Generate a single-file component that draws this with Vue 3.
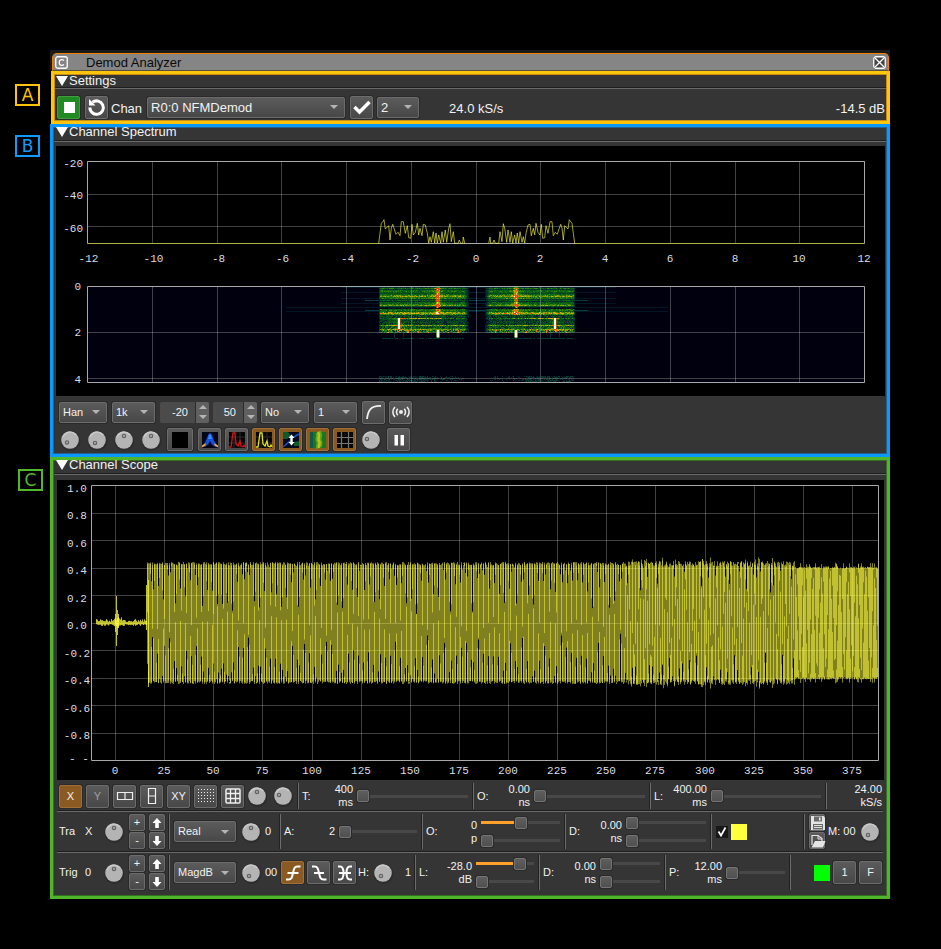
<script setup>
import { h } from 'vue'

const Dial = ({ dx, dy, label }) =>
  h('svg', { class: 'dial', viewBox: '0 0 22 22', role: 'slider', 'aria-label': label, 'aria-valuenow': 0, tabindex: 0 }, [
    h('circle', { cx: 11.5, cy: 12, r: 10, fill: '#262626', opacity: 0.55 }),
    h('circle', { cx: 11, cy: 11, r: 8.8, fill: '#b4b4b4' }),
    h('path', { d: 'M4 8a7.6 7.6 0 0 1 13-2', fill: 'none', stroke: '#cacaca', 'stroke-width': 1.4 }),
    h('circle', { cx: 11 + dx, cy: 11 + dy, r: 1.7, fill: '#a2a2a2', stroke: '#606060', 'stroke-width': 1.1 }),
  ])
Dial.props = ['dx', 'dy', 'label']

const Slider = ({ value, label }) =>
  h('input', {
    type: 'range', class: 'slider', min: 0, max: 100, value: value || 0, 'aria-label': label,
    style: { '--fill': (value || 0) + '%' },
  })
Slider.props = ['value', 'label']

const Drop = ({ text, label }) =>
  h('span', { class: 'drop' }, [
    h('select', { 'aria-label': label }, [h('option', text)]),
    h('i'),
  ])
Drop.props = ['text', 'label']

const Spin = ({ value, label }) =>
  h('span', { class: 'spin' }, [
    h('input', { type: 'text', inputmode: 'numeric', value, 'aria-label': label }),
    h('span', [
      h('button', { type: 'button', 'aria-label': label + ' up' }, [h('i', { class: 'up' })]),
      h('button', { type: 'button', 'aria-label': label + ' down' }, [h('i', { class: 'down' })]),
    ]),
  ])
Spin.props = ['value', 'label']

let seed = 7
const rnd = () => {
  seed = (seed * 16807) % 2147483647
  return seed / 2147483647
}

/* spectrum plot */
const freqTicks = Array.from({ length: 13 }, (_, i) => ({
  x: Math.round(31 + i * 64.75) + 0.5,
  tx: Math.round(31 + i * 64.75) + (i < 6 ? 1.5 : 0),
  label: String(i * 2 - 12),
}))
const lobe = [
  26, 115, 30, 85, 34, 55, 38, 50, 42, 44, 46, 72, 50, 68, 56, 62, 60, 105, 64, 70, 68, 58, 72, 70, 78, 88, 84, 82,
  90, 92, 94, 50, 100, 50, 106, 85, 112, 62, 116, 98, 122, 100, 126, 58, 130, 90, 136, 82, 142, 55, 146, 90, 150, 70,
  156, 92, 160, 58, 166, 60, 172, 85, 176, 114, 180, 95, 184, 112, 190, 80, 194, 114, 198, 84, 202, 114, 206, 90,
  212, 114, 216, 80, 220, 112, 226, 75, 230, 112, 236, 70, 240, 56, 244, 110, 250, 80, 254, 115, 264, 115, 268, 105,
  272, 115, 278, 115, 280, 96, 284, 115,
]
const lobePath = (mirror) => {
  let d = ''
  for (let i = 0; i < lobe.length; i += 2) {
    const x = (mirror ? 640 - lobe[i] : lobe[i]) / 3 + 314
    d += (i ? 'L' : 'M') + x.toFixed(1) + ' ' + (lobe[i + 1] / 3 + 59).toFixed(1)
  }
  return d
}
const spectrum = [lobePath(false), lobePath(true)]

/* waterfall */
const ramp = ['#01080f', '#02202a', '#033b2c', '#07501a', '#0f6c12', '#3a8608', '#86a006', '#cfae06', '#ee6a10', '#ee2a12', '#fff4c8']
const rowLevel = [
  0.15, 0.42, 0.18, 0.38, 0.42, 0.33, 0.28, 0.38, 0.5, 0.58, 0.42, 0.45, 0.18, 0.34, 0.15, 0.34, 0.38, 0.45, 0.55,
  0.3, 0.06, 0.05, 0.4, 0.42, 0.36, 0.57, 0.66, 0.48, 0.25, 0.32, 0.25, 0.42, 0.28, 0.22, 0.27, 0.3, 0.26, 0.3,
  0.55, 0.38, 0.36, 0.4, 0.57, 0.52, 0.44, 0.38,
]
const fall = ramp.map(() => '')
const put = (x, y, v) => {
  const k = Math.max(0, Math.min(10, Math.round(v * 10)))
  if (k) fall[k] += `M${x} ${y + 0.5}h1`
}
for (let i = 0; i < 46; i++) {
  const y = 141 + i
  for (let s = 0; s < 90; s++) {
    const edge = Math.min(1, (90 - s) / 5, (s + 1) / 2)
    for (const side of [0, 1]) {
      const x = side ? 518 - s : 323 + s
      let v = rowLevel[i] * (0.75 + rnd() * 0.45) * edge
      if (i > 27 && i !== 38 && i < 42 && rnd() < 0.3) v *= 0.4
      if (i > 42 && rnd() < 0.3) v *= 0.3
      const hot = Math.abs(s - 58.5)
      if (i < 28 && rowLevel[i] > 0.1) v += 0.3 * Math.exp(-hot / 3) + (hot < 2 ? 0.12 : 0)
      const warm = Math.abs(s - 20.5)
      if (i > 30 && i < 44) v += 0.2 * Math.exp(-warm / 5)
      if (i > 42 && s < 85 && (s + 2) % 10 < 2 && rnd() > 0.45) v = 0.8
      if (i === 31 && s > 15 && s < 64) v += 0.22
      put(x, y, v)
    }
  }
}
for (let s = 0; s < 85; s++) {
  for (const x of [323 + s, 518 - s]) {
    if (rnd() < 0.7) put(x, 192, 0.15)
    for (let y = 230; y < 236; y++) if (rnd() < (s < 50 ? 0.7 : 0.3)) put(x, y, rnd() < 0.5 ? 0.1 : 0.2)
  }
}
const echoes = [141, 146, 152, 157, 161, 165]

/* scope plot */
const timeTicks = Array.from({ length: 16 }, (_, i) => ({
  x: Math.round(58 + i * 49.13) + 0.5,
  tx: Math.round(58 + i * 49.13),
  label: String(i * 25),
}))
const ampTicks = ['1.0', '0.8', '0.6', '0.4', '0.2', '0.0', '-0.2', '-0.4', '-0.6', '-0.8'].map((label, i) => ({
  label,
  y: Math.round(5 + i * 27.5) + 0.5,
  ty: Math.round(11.6 + i * 27.5),
}))
const wave = ['', '', '', '']
const quiet = (() => {
  let d = ''
  for (let x = 39; x < 90; x++) {
    const near = x > 55 && x < 65 ? 3 : 0
    const a = 1 + rnd() * 3 + near * rnd()
    d += `M${x + 0.5} ${(143 - a).toFixed(1)}V${(143 + 1 + rnd() * 2 + near * rnd()).toFixed(1)}`
  }
  return d
})()
const pulse = 'M58.5 134V152M59.5 116V166M60.5 130V155M61.5 134V148M89.5 105V150M91.5 100V207'
let phase = 0
let peak = 117
let lastPass = 0
for (let x = 90; x < 821; x++) {
  const seen = {}
  const zone = x < 567 ? 0 : x < 738 ? 1 : 2
  const period = [1.69, 1.42, 1.13][zone] * (1 + (rnd() - 0.5) * [0.09, 0.16, 0.08][zone])
  for (let k = 0; k < 24; k++) {
    phase += (2 * Math.PI) / period / 24
    const pass = Math.floor(phase / Math.PI - 0.5)
    if (pass !== lastPass) {
      lastPass = pass
      peak = [114, 111, 107][zone] + rnd() * [7, 12, 5][zone]
      if (zone && rnd() < 0.12) peak += 8
    }
    const v = 143 - Math.max(-1, Math.min(1, Math.sin(phase) * 1.12)) * peak * 0.505
    const id = ((pass % 4) + 4) % 4
    if (!seen[id]) seen[id] = [v, v]
    seen[id][0] = Math.min(seen[id][0], v)
    seen[id][1] = Math.max(seen[id][1], v)
  }
  for (const id in seen) wave[id] += `M${x + 0.5} ${seen[id][0].toFixed(1)}V${seen[id][1].toFixed(1)}`
}
</script>

<template>
  <main class="page">
    <span></span>
    <header class="frame">
      <div class="titlebar">
        <svg class="win-icon" viewBox="0 0 13 13"><rect x=".75" y=".75" width="11.5" height="11.5" rx="2" /><path d="M8.8 4.6C7.8 3 4.2 3 4.2 6.5S7.8 10 8.8 8.4" /></svg>
        <h1>Demod Analyzer</h1>
        <button class="close" aria-label="Close">
          <svg class="win-icon" viewBox="0 0 13 13"><rect x=".75" y=".75" width="11.5" height="11.5" rx="2" /><path d="M2 2l9 9M11 2l-9 9" /></svg>
        </button>
      </div>
    </header>

    <span class="mark mark-a">A</span>
    <section class="panel panel-a">
      <h2><i></i>Settings</h2>
      <div class="settings">
        <button class="btn stop" aria-label="Stop"><svg viewBox="0 0 20 20"><path d="M5 5h11v11H5z" fill="#fff" /></svg></button>
        <button class="btn reset" aria-label="Reset"><svg viewBox="0 0 20 20"><path d="M5.500 5.300A6.700 6.700 0 1 1 2.900 10.500" fill="none" stroke="#fff" stroke-width="3" /><path d="M2 2v6.500H8.500z" fill="#fff" /></svg></button>
        <span class="chan">Chan</span>
        <Drop class="w-chan" text="R0:0 NFMDemod" label="Channel" />
        <button class="btn" aria-label="Apply"><svg viewBox="0 0 20 20"><path d="M2.500 10l5 5L17.500 5" fill="none" stroke="#fff" stroke-width="3.400" /></svg></button>
        <Drop class="w-dec" text="2" label="Decimation" />
        <output class="rate">24.0 kS/s</output>
        <output class="power">-14.5 dB</output>
      </div>
    </section>

    <span class="mark mark-b">B</span>
    <section class="panel panel-b">
      <h2><i></i>Channel Spectrum</h2>
      <svg class="plot plot-spectrum" viewBox="0 0 829 250">
        <g class="grid">
          <path v-for="t in freqTicks" :key="t.x" :d="`M${t.x} 15V97`" />
          <path d="M31 48.5H808M31 80.5H808" />
        </g>
        <path class="axis" d="M31.5 15.5H808.5V97.5H31.5z" />
        <path class="base" d="M32 97.5H323M519 97.5H808" />
        <path v-for="d in spectrum" :key="d" class="trace" :d="d" />
        <g class="tick mid"><text v-for="t in freqTicks" :key="t.x" :x="t.tx" y="116">{{ t.label }}</text></g>
        <g class="tick end">
          <text x="27" y="21">-20</text><text x="27" y="53">-40</text><text x="27" y="86">-60</text>
          <text x="25" y="144">0</text><text x="25" y="190">2</text><text x="25" y="237">4</text>
        </g>
        <rect x="32" y="141" width="777" height="96" fill="#00000f" />
        <g class="echo"><path v-for="y in echoes" :key="y" :d="`M${y > 160 ? 230 : 285} ${y + .5}H${y > 160 ? 612 : 560}M410 ${y + .5}H432`" /><path class="bright" d="M309 154.5H532M309 164.5H532" /></g>
        <g class="fall"><path v-for="(d, i) in fall" :key="i" :d="d" :stroke="ramp[i]" /></g>
        <g>
          <path d="M381.5 142V162M460.5 142V162" stroke="#f2410f" stroke-width="3" stroke-opacity=".8" stroke-dasharray="3 2 5 1" />
          <path d="M381.5 143V162M460.5 143V162" stroke="#ffd9a0" stroke-opacity=".7" stroke-dasharray="1 3 2 3" />
          <path d="M343 172V184M499 172V184" stroke="#e0431c" stroke-width="3" />
          <path d="M343 172V183M499 172V183" stroke="#fffbe6" stroke-width="2" />
          <path d="M382 184V191.500M460 184V191.500" stroke="#5f9a40" stroke-width="4" />
          <path d="M382 184V191.500M460 184V191.500" stroke="#fffbe6" stroke-width="2" />
          <path d="M338.5 187V192M347.5 187V191M494.5 187V192M503.5 187V191" stroke="#04303c" />
        </g>
        <g class="grid">
          <path v-for="t in freqTicks" :key="t.x" :d="`M${t.x} 141V236`" />
          <path d="M31 186.5H808M31 232.5H808" />
        </g>
        <path class="axis" d="M31.5 140.5H808.5V236.5H31.5z" />
      </svg>
      <div class="tools first">
        <Drop class="w-48" text="Han" label="Window" />
        <Drop class="w-43" text="1k" label="FFT size" />
        <Spin class="w-49" value="-20" label="Reference level" />
        <Spin class="w-44" value="50" label="Range" />
        <Drop class="w-48" text="No" label="Averaging mode" />
        <Drop class="w-43" text="1" label="Averages" />
        <button class="btn" aria-label="Linear scale"><svg viewBox="0 0 20 20"><path d="M3 17C4 9 6 3.500 17 4" fill="none" stroke="#eee" stroke-width="1.800" /></svg></button>
        <button class="btn" aria-label="Broadcast"><svg viewBox="0 0 20 20" fill="none" stroke="#eee" stroke-width="1.600"><circle cx="10" cy="10" r="2" fill="#eee" stroke="none" /><path d="M6.800 6.800a4.500 4.500 0 0 0 0 6.400M13.200 6.800a4.500 4.500 0 0 1 0 6.400M4 5a7 7 0 0 0 0 10M16 5a7 7 0 0 1 0 10" /></svg></button>
      </div>
      <div class="tools second">
        <div class="dials">
          <Dial :dx="-3" :dy="2.500" label="Decay" /><Dial :dx="-2" :dy="3" label="Divisor" />
          <Dial :dx="0" :dy="-4" label="Stroke" /><Dial :dx="0" :dy="-4" label="Trace" />
        </div>
        <button class="btn wide" aria-label="Colour map"><svg viewBox="0 0 20 20"><path d="M2 2h16v16H2z" fill="#000" /></svg></button>
        <button class="btn" aria-label="Phosphor"><svg viewBox="0 0 20 20"><path d="M2 2h16v16H2z" fill="#020616" /><path d="M2 17C6 14 7.500 3 10 3s4 11 8 14c-4 0-6-2-8-6-2 4-4 6-8 6z" fill="#1450d8" /><path d="M9 4.500h2L12 9H8z" fill="#2f8cff" /><path d="M2 15.500L5.500 13v2.500L2 17.500zM18 15.500L14.500 13v2.500l3.500 2z" fill="#f2a23a" /></svg></button>
        <button class="btn" aria-label="Max hold"><svg viewBox="0 0 20 20"><path d="M2 2h16v16H2z" fill="#050505" /><path d="M2 7h16M2 13h16M7 2v16M13 2v16" stroke="#2c2c2c" /><path d="M2 17h2L6 3h2l1 11 2 2 2-5 1 5 2 1 1-2 1 2" fill="none" stroke="#d41414" stroke-width="1.300" /></svg></button>
        <button class="btn on" aria-label="Current trace"><svg viewBox="0 0 20 20"><path d="M2 2h16v16H2z" fill="#050505" /><path d="M2 7h16M2 13h16M7 2v16M13 2v16" stroke="#2c2c2c" /><path d="M2 17h2L6 3h2l1 11 2 2 2-5 1 5 2 1 1-2 1 2" fill="none" stroke="#e2e214" stroke-width="1.300" /></svg></button>
        <button class="btn on" aria-label="Invert waterfall"><svg viewBox="0 0 20 20"><path d="M2 2h16v16H2z" fill="#04091c" /><path d="M2 2h5l3 4-4 3H2zM13 12l5-1v5h-5z" fill="#0f5a2c" /><path d="M11 8l7-4M2 17l7-6" stroke="#1c52c8" stroke-width="1.600" /><path d="M10.500 4.500l3 3.500h-1.800v4h1.800l-3 3.500-3-3.500h1.800V8H7.500z" fill="#fff" /></svg></button>
        <button class="btn on" aria-label="Waterfall"><svg viewBox="0 0 20 20"><path d="M2 2h16v16H2z" fill="#1c7424" /><path d="M2 2h3v16H2z" fill="#10564a" /><path d="M10 2c3 4-1 6 1 9s-1 4 0 7" fill="none" stroke="#5aa822" stroke-width="6" /><path d="M10 2c3 4-1 6 1 9s-1 4 0 7" fill="none" stroke="#c4c018" stroke-width="2.400" /></svg></button>
        <button class="btn on" aria-label="Grid"><svg viewBox="0 0 20 20"><path d="M2 2h16v16H2z" fill="#080808" /><path d="M2 7.500h16M2 13.500h16M6.500 2v16M13.500 2v16" stroke="#777" stroke-width="1.200" /></svg></button>
        <Dial :dx="-4" :dy="-1" label="Grid intensity" />
        <button class="btn pause" aria-label="Pause"><svg viewBox="0 0 20 20"><path d="M5.500 5h3.500v10.500H5.500zM11.500 5H15v10.500h-3.500z" fill="#fff" /></svg></button>
      </div>
    </section>

    <span class="mark mark-c">C</span>
    <section class="panel panel-c">
      <h2><i></i>Channel Scope</h2>
      <svg class="plot plot-scope" viewBox="0 0 827 300">
        <g class="grid">
          <path v-for="t in timeTicks" :key="t.x" :d="`M${t.x} 5V280`" />
          <path v-for="t in ampTicks" :key="t.y" :d="`M35 ${t.y}H821`" />
        </g>
        <path class="axis" d="M34.500 5.500H821.500V280.500H34.500z" />
        <g class="wave">
          <path v-for="(d, i) in wave" :key="i" :d="d" />
          <path class="strong" :d="quiet" /><path class="strong" :d="pulse" />
        </g>
        <g class="tick mid">
          <text v-for="t in timeTicks" :key="t.x" :x="t.tx" y="294">{{ t.label }}</text>
          <text v-for="t in ampTicks" :key="t.y" x="20" :y="t.ty">{{ t.label }}</text>
          <text x="22" y="282">- -</text>
        </g>
      </svg>

      <div class="row row-1">
        <div class="cell views">
          <button class="btn on">X</button>
          <button class="btn dim">Y</button>
          <button class="btn" aria-label="Horizontal split"><svg viewBox="0 0 20 20"><path d="M2.500 6.500h15v7h-15zM10 6.500v7" fill="none" stroke="#eee" stroke-width="1.200" /></svg></button>
          <button class="btn" aria-label="Vertical split"><svg viewBox="0 0 20 20"><path d="M6.500 2.500h7v15h-7zM6.500 10h7" fill="none" stroke="#eee" stroke-width="1.200" /></svg></button>
          <button class="btn">XY</button>
          <button class="btn" aria-label="Dots"><svg viewBox="0 0 20 20"><path d="M2 3.500h16M2 6.500h16M2 9.500h16M2 12.500h16M2 15.500h16" stroke="#eee" stroke-dasharray="1 2" /></svg></button>
          <button class="btn" aria-label="Grid"><svg viewBox="0 0 20 20"><rect x="3" y="3" width="14" height="14" rx="1" fill="none" stroke="#eee" stroke-width="1.500" /><path d="M3 7.500h14M3 12.500h14M7.500 3v14M12.500 3v14" stroke="#eee" stroke-width="1.300" /></svg></button>
          <div class="twin"><Dial :dx="0" :dy="-4" label="Grid intensity" /><Dial :dx="-4" :dy="-1" label="Trace intensity" /></div>
        </div>
        <div class="cell sep"><span class="cap near"><b>T:</b><span>400<br>ms</span></span><Slider label="Time" /></div>
        <div class="cell sep"><span class="cap"><b>O:</b><span>0.00<br>ns</span></span><Slider label="Time offset" /></div>
        <div class="cell sep"><span class="cap"><b>L:</b><span>400.00<br>ms</span></span><Slider label="Trace length" /></div>
        <div class="cell sep last"><span class="right">24.00<br>kS/s</span></div>
      </div>

      <div class="row row-2">
        <div class="cell">
          <span class="name">Tra</span><span class="num">X</span>
          <Dial :dx="0" :dy="-4" label="Trace" />
          <div class="quad">
            <button class="btn small">+</button>
            <button class="btn small" aria-label="Move up"><svg viewBox="0 0 14 14"><path d="M7 2L11.500 7H8.800v5H5.200V7H2.500z" fill="#fff" /></svg></button>
            <button class="btn small">-</button>
            <button class="btn small" aria-label="Move down"><svg viewBox="0 0 14 14"><path d="M7 12L2.500 7h2.700V2h3.600v5h2.700z" fill="#fff" /></svg></button>
          </div>
        </div>
        <div class="cell sep"><Drop class="w-62" text="Real" label="Projection" /><Dial :dx="0" :dy="-4" label="Trace memory" /><span class="after">0</span></div>
        <div class="cell sep"><span class="cap near"><b>A:</b><span>2</span></span><Slider label="Amplitude" /></div>
        <div class="cell sep"><span class="cap near"><b>O:</b><span>0<br>p</span></span><div class="pair"><Slider :value="50" label="Offset coarse" /><Slider label="Offset fine" /></div></div>
        <div class="cell sep"><span class="cap"><b>D:</b><span>0.00<br>ns</span></span><div class="pair"><Slider label="Delay coarse" /><Slider label="Delay fine" /></div></div>
        <div class="cell sep">
          <label class="tick-box"><input type="checkbox" checked aria-label="Show trace" /><svg viewBox="0 0 12 12"><path d="M2.500 5.500l2.500 4 4.500-8" fill="none" stroke="#fff" stroke-width="1.700" /></svg></label>
          <button class="swatch yellow" aria-label="Trace colour"></button>
        </div>
        <div class="cell sep">
          <div class="files">
            <button class="btn small" aria-label="Save"><svg viewBox="0 0 16 16"><path d="M1 1h12.500L15 2.500V15H1z" fill="#e4e4e4" /><path d="M4 1.500h8v5H4zM3 9h10v5.500H3z" fill="#6a6a6a" /><path d="M9 2.500h1.500v3H9z" fill="#eee" /><path d="M4 10.500h8M4 12.500h8" stroke="#ddd" /></svg></button>
            <button class="btn small" aria-label="Load"><svg viewBox="0 0 16 16"><path d="M2 12V2.500h6l4 3V8" fill="none" stroke="#e4e4e4" stroke-width="1.200" /><path d="M8 2.500V6h4" fill="none" stroke="#e4e4e4" /><path d="M1.500 14.500L5 8h10.500L13 14.500z" fill="#e4e4e4" /></svg></button>
          </div>
          <span class="mem">M: 00</span><Dial :dx="-2" :dy="3" label="Memory" />
        </div>
      </div>

      <div class="row row-3">
        <div class="cell">
          <span class="name">Trig</span><span class="num">0</span>
          <Dial :dx="0" :dy="-4" label="Trigger" />
          <div class="quad">
            <button class="btn small">+</button>
            <button class="btn small" aria-label="Move up"><svg viewBox="0 0 14 14"><path d="M7 2L11.500 7H8.800v5H5.200V7H2.500z" fill="#fff" /></svg></button>
            <button class="btn small">-</button>
            <button class="btn small" aria-label="Move down"><svg viewBox="0 0 14 14"><path d="M7 12L2.500 7h2.700V2h3.600v5h2.700z" fill="#fff" /></svg></button>
          </div>
        </div>
        <div class="cell sep">
          <Drop class="w-62" text="MagdB" label="Trigger projection" /><Dial :dx="-2" :dy="3" label="Repeat" /><span class="after two">00</span>
          <div class="edges">
            <button class="btn on" aria-label="Rising edge"><svg viewBox="0 0 20 20" fill="none" stroke="#fff" stroke-width="2"><path d="M3 16.500h2.500c3 0 3.500-2 4.500-6.500s1.500-6.500 4.500-6.500H17.500M4.500 10h11" /></svg></button>
            <button class="btn" aria-label="Falling edge"><svg viewBox="0 0 20 20" fill="none" stroke="#fff" stroke-width="2"><path d="M3 3.500h2.500c3 0 3.500 2 4.500 6.500s1.500 6.500 4.500 6.500H17.500M5 10h10" /></svg></button>
            <button class="btn" aria-label="Both edges"><svg viewBox="0 0 20 20" fill="none" stroke="#fff" stroke-width="2"><path d="M3 3.500h2c3 0 3.500 3 3.500 6.500s-.5 6.500-3.500 6.500H3M17 3.500h-2c-3 0-3.500 3-3.500 6.500s.5 6.500 3.500 6.500h2M4 10h12" /></svg></button>
          </div>
          <span class="hold">H:</span><Dial :dx="-2" :dy="3" label="Holdoff" /><span class="right hold-val">1</span>
        </div>
        <div class="cell sep"><span class="cap"><b>L:</b><span>-28.0<br>dB</span></span><div class="pair"><Slider :value="83" label="Level coarse" /><Slider label="Level fine" /></div></div>
        <div class="cell sep"><span class="cap"><b>D:</b><span>0.00<br>ns</span></span><div class="pair"><Slider label="Delay coarse" /><Slider label="Delay fine" /></div></div>
        <div class="cell sep"><span class="cap"><b>P:</b><span>12.00<br>ms</span></span><Slider label="Pre-trigger" /></div>
        <div class="cell sep finish">
          <button class="swatch green" aria-label="Trigger colour"></button>
          <button class="btn">1</button>
          <button class="btn">F</button>
        </div>
      </div>
    </section>
  </main>
</template>

<style>
body { background: #000; }
</style>

<style scoped>
.page {
  display: grid;
  grid-template-columns: 50px 1fr;
  padding: 50px 51px 50px 0;
  font: 11px/13px "Liberation Sans", Arial, sans-serif;
  color: #f2f2f2;
}
.page :deep(*) { box-sizing: border-box; }
.page button { padding: 0; font: inherit; color: inherit; }

.frame { background: #1a1a1a; padding: 3px 1px 0 2px; }
.titlebar {
  display: flex;
  align-items: center;
  height: 18px;
  padding: 0 2px;
  background: #858585;
  border: 1px solid #f08000;
  border-bottom: 1px solid #5a5040;
  border-radius: 5px 5px 0 0;
}
.titlebar h1 { flex: 1; margin: 0 0 0 18px; font-size: 13px; font-weight: normal; color: #0a0a0a; }
.win-icon { display: block; width: 13px; height: 13px; fill: none; stroke: #fff; stroke-width: 1.3; }
.close { border: 0; background: #444; border-radius: 3px; }

.mark {
  width: 25px;
  height: 22px;
  margin-left: 15px;
  border: 2px solid;
  font: 17px/18px "DejaVu Sans", sans-serif;
  text-align: center;
}
.mark-a { color: #ffc40c; margin-top: 13px; }
.mark-b { color: #109cff; margin-top: 11px; }
.mark-c { color: #52b82c; margin: 12px 0 0 18px; }

.panel { min-width: 0; background: #353535; border: 3px solid; }
.panel-a { margin-left: 1px; border-color: #ffc40c; box-shadow: inset 0 0 0 1px #c98d10; padding-bottom: 1px; }
.panel-b { border-color: #0b98fb; box-shadow: inset 0 0 0 1px #28608c; }
.panel-c { border-color: #4fb52a; box-shadow: inset 0 0 0 1px #34701f; padding-bottom: 3px; }
.panel h2 {
  display: flex;
  align-items: center;
  gap: 1px;
  height: 15px;
  margin: 0 1px;
  padding: 0 0 4px 2px;
  font-size: 13px;
  line-height: 10px;
  font-weight: normal;
  border-bottom: 1px solid #6a6a6a;
  box-shadow: inset 0 -1px #1e1e1e;
}
.panel-a h2 { padding: 1px 0 2px 1px; }
.panel h2 i {
  border: 6px solid transparent;
  border-top: 10px solid #fff;
  border-bottom: 0;
}

.btn {
  display: grid;
  place-items: center;
  flex: none;
  width: 23px;
  height: 23px;
  background: linear-gradient(#5b5b5b, #484848);
  border: 1px solid #6c6c6c;
  border-radius: 2px;
  box-shadow: 0 0 0 1px #2a2a2a;
}
.btn svg { display: block; width: 20px; height: 20px; }
.btn.on { background: #8a5a22; border-color: #a0703a; }
.btn.dim { color: #a0a0a0; }
.page .btn.wide { width: 26px; margin-right: 0; }
.btn.small { width: 16px; height: 17px; }
.btn.small svg { width: 14px; height: 14px; }

.settings {
  display: flex;
  align-items: center;
  height: 31px;
  padding: 5px 2px 0 3px;
  font-size: 13px;
}
.settings .btn.stop { background: #228a22; border-color: #3f9c3f; margin-right: 5px; }
.chan { margin: 2px 5px 0 3px; }
.rate { margin: 2px 0 0 30px; }
.power { margin: 2px 0 0 auto; }

.drop { display: grid; grid-template-columns: 1fr; flex: none; align-items: center; }
.drop :deep(select) {
  grid-area: 1 / 1;
  min-width: 0;
  width: 100%;
  height: 21px;
  padding: 0 3px;
  appearance: none;
  font: inherit;
  color: inherit;
  background: linear-gradient(#5b5b5b, #484848);
  border: 1px solid #6c6c6c;
  border-radius: 2px;
  box-shadow: 0 0 0 1px #2a2a2a;
}
.drop :deep(i) {
  grid-area: 1 / 1;
  justify-self: end;
  margin-right: 7px;
  border: 4px solid transparent;
  border-top-color: #b4b4b4;
  border-bottom: 0;
  pointer-events: none;
}
.w-chan { width: 198px; margin-right: 5px; }
.w-dec { width: 42px; margin-left: 4px; }
.w-48 { width: 48px; }
.w-43 { width: 43px; }
.w-62 { width: 62px; margin-left: 4px; }

.spin { display: flex; flex: none; height: 21px; margin-right: -1px; background: #4b4b4b; border-radius: 2px; }
.spin :deep(input) {
  flex: 1;
  min-width: 0;
  padding: 0 7px 0 0;
  border: 0;
  background: none;
  color: inherit;
  font: inherit;
  text-align: right;
}
.spin :deep(span) { display: grid; width: 14px; background: #606060; border-left: 1px solid #2c2c2c; border-radius: 0 2px 2px 0; }
.spin :deep(button) { display: grid; place-items: center; min-width: 0; padding: 0; border: 0; background: none; }
.spin :deep(i) { border: 4px solid transparent; }
.spin :deep(.up) { border-bottom-color: #b4b4b4; border-top: 0; }
.spin :deep(.down) { border-top-color: #b4b4b4; border-bottom: 0; }
.w-49 { width: 49px; }
.w-44 { width: 44px; }

.plot { display: block; height: auto; background: #000; }
.plot-spectrum { width: calc(100% - 5px); margin: 4px 2px 0 3px; }
.plot-scope { width: calc(100% - 7px); margin: 5px 3px 0 4px; }
.grid path { stroke: #fff; stroke-opacity: .25; fill: none; }
.axis { fill: none; stroke: #a8a8a8; }
.base { stroke: #b0b048; }
.trace { fill: none; stroke: #ffff40; stroke-opacity: .62; }
.fall path { stroke-width: 1; shape-rendering: crispEdges; }
.echo path { stroke: #052434; stroke-opacity: .6; }
.echo .bright { stroke: #0a3c44; stroke-opacity: 1; }
.wave path { stroke: #ffff40; stroke-opacity: .5; fill: none; }
.wave .strong { stroke-opacity: .75; }
.tick text { font: 11px "Liberation Mono", monospace; fill: #dcdce4; }
.mid { text-anchor: middle; }
.end { text-anchor: end; }

.tools { display: flex; align-items: center; gap: 5px; padding-left: 6px; }
.first { height: 32px; }
.first .btn { margin-right: -1px; }
.second { height: 23px; margin-bottom: 3px; }
.dial { display: block; flex: none; width: 22px; height: 22px; }
.dials { display: flex; gap: 5px; }
.second .btn { margin-right: -1px; }

.row {
  display: grid;
  margin: 0 4px;
  border-bottom: 1px solid #6a6a6a;
  box-shadow: inset 0 -1px #1e1e1e;
  height: 41px;
}
.row-1 { height: 32px; grid-template-columns: 241px 175fr 177fr 176fr 57px; }
.row-2 { grid-template-columns: 112px 111px 142fr 143fr 146fr 93px 79px; }
.row-3 { height: 40px; grid-template-columns: 112px 246px 124fr 126fr 125fr 93px; border-bottom: 0; box-shadow: none; }
.cell { display: flex; align-items: center; min-width: 0; margin: 2px 0 4px; }
.row-1 .cell { margin: 3px 0 2px; }
.sep { border-left: 1px solid #6c6c6c; box-shadow: -1px 0 #222; padding-right: 5px; }
.views { padding-left: 2px; gap: 4px; }
.twin { display: flex; gap: 4px; margin-left: -2px; }
.cap { display: flex; align-items: center; justify-content: space-between; flex: none; width: 56px; margin-right: 4px; padding-left: 3px; }
.cap.near { width: 54px; }
.cap b { font-weight: normal; }
.cap > span, .right { text-align: right; }
.last { justify-content: flex-end; padding-right: 1px; }
.name { width: 28px; padding-left: 2px; }
.num { width: 18px; }
.quad { display: grid; grid-template-columns: 16px 16px; gap: 1px 4px; margin-left: 4px; }
.sep .dial { margin-left: 4px; }
.after { margin-left: 3px; }
.two { width: 16px; }
.edges { display: flex; gap: 3px; }
.hold { margin-left: 2px; }
.sep .hold + .dial { margin-left: 3px; }
.hold-val { flex: 1; margin-right: -1px; }
.pair { flex: 1; display: grid; gap: 6px; min-width: 0; }

.slider {
  flex: 1;
  width: 100%;
  min-width: 0;
  height: 12px;
  margin: 0;
  appearance: none;
  background: linear-gradient(90deg, #ffa02a var(--fill), #484848 var(--fill)) center / 100% 3px no-repeat;
  background-color: transparent;
}
.slider::-webkit-slider-runnable-track { height: 12px; }
.slider::-webkit-slider-thumb {
  appearance: none;
  width: 12px;
  height: 12px;
  background: linear-gradient(#5e5e5e, #505050);
  border: 1px solid #747474;
  border-radius: 2px;
  box-shadow: 0 0 0 1px #2a2a2a;
}

.tick-box { display: grid; width: 12px; height: 12px; margin: 0 3px 0 4px; background: #181818; }
.tick-box input { grid-area: 1 / 1; width: 12px; height: 12px; margin: 0; opacity: 0; }
.tick-box svg { grid-area: 1 / 1; width: 12px; height: 12px; pointer-events: none; }
.swatch { width: 16px; height: 16px; border: 0; }
.yellow { background: #ffff3c; }
.green { background: #00ff00; }
.files { display: grid; gap: 1px; margin: 0 3px 0 4px; }
.files .btn svg { width: 16px; height: 16px; }
.mem { flex: none; }
.sep .mem + .dial { margin-left: 3px; }
.finish { justify-content: flex-end; gap: 3px; padding-right: 1px; }
</style>
